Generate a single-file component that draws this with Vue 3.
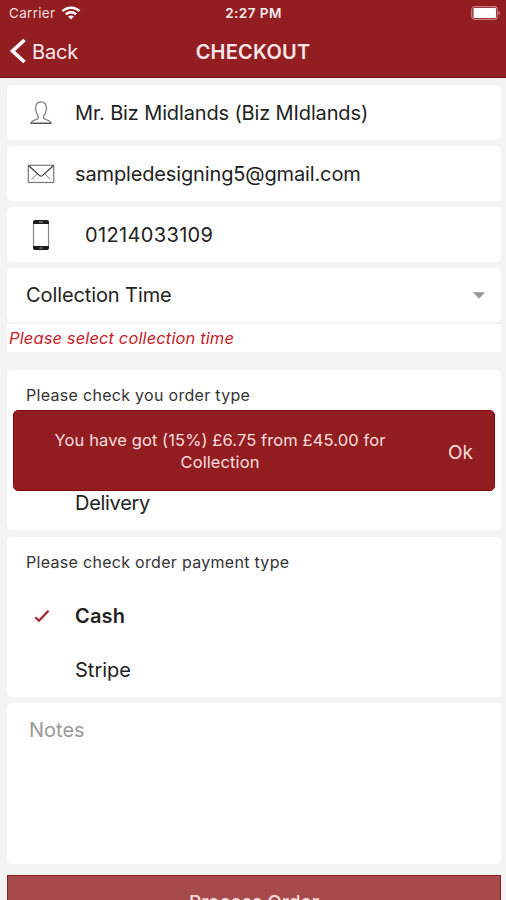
<script setup>
const paymentTypes = [
  { label: 'Cash', selected: true },
  { label: 'Stripe', selected: false },
]
</script>

<template>
  <div class="screen">
    <header class="header">
      <div class="status">
        <div class="carrier">
          <span class="carrier-name">Carrier</span>
          <svg class="wifi" viewBox="0 0 20 14" width="20" height="14">
            <path d="M1.5 5.2C6.2.5 13.8.5 18.500 5.200" fill="none" stroke="#fff" stroke-width="2.500" />
            <path d="M4.800 8.400C7.700 5.600 12.300 5.600 15.200 8.400" fill="none" stroke="#fff" stroke-width="2.400" />
            <path d="M10 13.500L7.100 10.600C8.700 9.100 11.300 9.100 12.900 10.600Z" fill="#fff" />
          </svg>
        </div>
        <span class="clock">2:27 PM</span>
        <svg class="battery" viewBox="0 0 31 14" width="31" height="14">
          <rect x="1.700" y=".7" width="25.600" height="12.600" rx="3" fill="none" stroke="#c58081" stroke-width="1.200" />
          <rect x="3.500" y="2" width="22.500" height="10" rx="1" fill="#fff" />
          <path d="M28.700 4.800C30.500 5.500 30.500 8.500 28.700 9.200Z" fill="#cc9495" />
        </svg>
      </div>
      <nav class="nav">
        <div class="back">
          <svg viewBox="0 0 18 28" width="18" height="28">
            <path d="M15.500 2L3.500 13L15.500 24" fill="none" stroke="#fff" stroke-width="3.700" />
          </svg>
          <span class="back-label">Back</span>
        </div>
        <h1 class="title"><span>CHECKOUT</span></h1>
      </nav>
    </header>

    <main class="content">
      <section class="card field">
        <span class="icon">
          <svg viewBox="0 0 24 26" width="24" height="26">
            <path d="M9.300 16C7.700 14.300 6.900 12 6.900 9.800C5.900 8.500 6.500 7.700 6.800 7.400C6.700 3.700 8.700 1.800 12 1.800S17.300 3.700 17.200 7.400C17.500 7.700 18.100 8.500 17.100 9.800C17.100 12 16.300 14.300 14.700 16V18.200C15.500 20 21.700 19.800 22 23.300H2C2.300 19.800 8.500 20 9.300 18.200Z" fill="#fff" stroke="#777" stroke-width="1.200" />
            <path d="M1.700 23.300H22.300" stroke="#555" stroke-width="1.300" />
          </svg>
        </span>
        <span class="text name">Mr. Biz Midlands (Biz MIdlands)</span>
      </section>
      <section class="card field">
        <span class="icon">
          <svg viewBox="0 0 28 20" width="28" height="20">
            <rect x="1.300" y="1.300" width="25.400" height="17.200" fill="none" stroke="#777" stroke-width="1.200" />
            <path d="M2 2L12.300 11.300Q14 12.700 15.700 11.300L26 2" fill="none" stroke="#333" stroke-width="1.100" />
            <path d="M4.500 15.500L10 10M23.500 15.500L18 10" fill="none" stroke="#888" stroke-width="1" />
          </svg>
        </span>
        <span class="text email">sampledesigning5@gmail.com</span>
      </section>
      <section class="card field">
        <span class="icon">
          <svg viewBox="0 0 18 32" width="18" height="32">
            <rect x="1.500" y="1.500" width="15" height="29" rx="2.200" fill="#fff" stroke="#888" stroke-width="1.200" />
            <path d="M1 5V3.200Q1 1 3.200 1H14.800Q17 1 17 3.200V5ZM1 27H17V28.800Q17 31 14.800 31H3.200Q1 31 1 28.800Z" fill="#1c1c1c" />
            <path d="M7 3H11M7.500 29H10.500" stroke="#aaa" stroke-width="1" />
          </svg>
        </span>
        <span class="text phone">01214033109</span>
      </section>
      <section class="card select">
        <span class="text time">Collection Time</span>
        <svg viewBox="0 0 12 7" width="12" height="7"><path d="M0 .3H12L6 6.700Z" fill="#989898" /></svg>
      </section>
      <p class="error"><span>Please select collection time</span></p>

      <section class="card group order">
        <h2 class="group-title t-order">Please check you order type</h2>
        <div class="options">
          <div class="option"><span class="text delivery">Delivery</span></div>
        </div>
        <div class="toast" role="alert">
          <p class="message"><span class="line-1">You have got (15%) £6.75 from £45.00 for</span><br /><span class="line-2">Collection</span></p>
          <button class="ok">Ok</button>
        </div>
      </section>

      <section class="card group payment">
        <h2 class="group-title t-payment">Please check order payment type</h2>
        <div class="options">
          <div v-for="type in paymentTypes" :key="type.label" class="option" :class="{ selected: type.selected }">
            <svg v-if="type.selected" class="check" viewBox="0 0 16 14" width="16" height="14">
              <path d="M1.300 8.300L5 11.800L14.500 1.800" fill="none" stroke="#a3202c" stroke-width="2.200" />
            </svg>
            <span class="text choice">{{ type.label }}</span>
          </div>
        </div>
      </section>

      <section class="card notes"><span>Notes</span></section>
      <button class="process">Process Order</button>
    </main>
  </div>
</template>

<style>
body {
  overflow: hidden;
}
</style>

<style scoped>
.screen {
  box-sizing: border-box;
  height: 900px;
  overflow: hidden;
  background: #f4f4f4;
  color: #222;
  font-family: Inter, "Liberation Sans", sans-serif;
}
.screen span {
  white-space: nowrap;
}
.header {
  box-sizing: border-box;
  height: 78px;
  background: #931e22;
  border-bottom: 1px solid #7c080c;
  color: #fff;
}
.status {
  display: grid;
  grid-template-columns: 1fr auto 1fr;
  align-items: center;
  height: 26px;
  padding: 0 5px 0 9px;
}
.carrier {
  display: flex;
  align-items: center;
  gap: 6px;
}
.carrier-name {
  font-size: 13.500px;
  letter-spacing: .3px;
  color: #f3dede;
}
.clock {
  margin-right: 3px;
  font-size: 13.500px;
  font-weight: 600;
  letter-spacing: .45px;
  color: #fbeeee;
}
.battery {
  justify-self: end;
}
.nav {
  display: grid;
  grid-template-columns: 1fr auto 1fr;
  align-items: center;
  height: 51px;
  padding: 0 9px;
}
.back {
  display: flex;
  align-items: center;
  gap: 5px;
}
.back-label {
  font-size: 20px;
  letter-spacing: -.2px;
  color: #fbeaea;
}
.title {
  margin: 0;
  font-size: 20px;
  font-weight: 600;
  letter-spacing: .2px;
  color: #fbe6e6;
}
.content {
  display: flex;
  flex-direction: column;
  gap: 6px;
  padding: 7px 5px 0 7px;
}
.card {
  box-sizing: border-box;
  flex: none;
  background: #fff;
  border-radius: 5px;
}
.field {
  display: flex;
  align-items: center;
  height: 55px;
}
.icon {
  display: flex;
  justify-content: center;
  width: 67px;
}
.text {
  font-size: 20px;
  line-height: 24px;
}
.field .text {
  margin-left: 1px;
  letter-spacing: -.14px;
}
.field .phone {
  margin-left: 11px;
  letter-spacing: .35px;
}
.time {
  letter-spacing: -.1px;
}
.select {
  display: flex;
  align-items: center;
  justify-content: space-between;
  height: 54px;
  padding: 0 16px 0 19px;
}
.error {
  box-sizing: border-box;
  height: 28px;
  margin: -4px 0 12px;
  padding-left: 2px;
  background: #fff;
  color: #c32229;
  font-size: 16.500px;
  font-style: italic;
  letter-spacing: .12px;
  line-height: 28px;
}
.group {
  display: flex;
  flex-direction: column;
  justify-content: space-between;
  height: 160px;
}
.order {
  position: relative;
  margin-bottom: 1px;
}
.group-title {
  align-self: flex-start;
  margin: 0;
  padding: 15px 0 0 19px;
  color: #333;
  font-size: 16px;
  font-weight: 400;
  letter-spacing: .3px;
  line-height: 20px;
  white-space: nowrap;
}
.option {
  display: grid;
  grid-template-columns: 41px 1fr;
  align-items: center;
  height: 54px;
  padding-left: 27px;
}
.option .text {
  grid-column: 2;
  justify-self: start;
}
.option .delivery {
  letter-spacing: -.3px;
}
.selected .text {
  font-weight: 600;
  letter-spacing: .2px;
}
.toast {
  position: absolute;
  top: 40px;
  left: 6px;
  display: grid;
  grid-template-columns: 1fr 68px;
  align-items: center;
  box-sizing: border-box;
  width: 482px;
  height: 81px;
  border: 1px solid #84090f;
  border-radius: 5px;
  background: #931e22;
  color: #f9dede;
}
.message {
  margin: 0;
  font-size: 16.500px;
  letter-spacing: .1px;
  line-height: 22px;
  text-align: center;
}
.ok {
  padding: 4px 0 0 1px;
  border: 0;
  background: none;
  color: inherit;
  font: 19px/24px Inter, sans-serif;
}
.notes {
  height: 161px;
  padding: 15px 22px;
  color: #999;
  font-size: 20px;
  line-height: 24px;
}
.process {
  flex: none;
  height: 56px;
  margin-top: 5px;
  padding: 0;
  border: 1px solid #931e22;
  background: #a74a4c;
  color: #f8dcdc;
  font: 500 19px/24px Inter, sans-serif;
}
</style>
